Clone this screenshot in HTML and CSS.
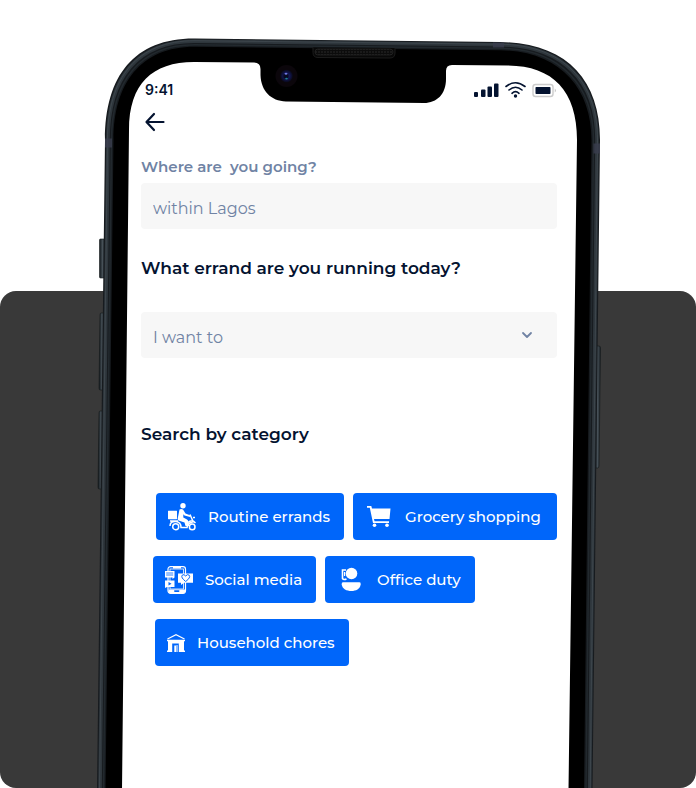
FILE: index.html
```html
<!DOCTYPE html>
<html lang="en">
<head>
<meta charset="utf-8">
<meta name="viewport" content="width=device-width, initial-scale=1">
<title>Errands</title>
<link rel="stylesheet" href="styles.css">
</head>
<body>
<main class="scene">
  <div class="stage">
    <svg class="device" viewBox="0 0 696 788" preserveAspectRatio="xMidYMin slice" aria-hidden="true">
      <defs>
        <linearGradient id="key" x1="0" x2="1" y1="0" y2="0">
          <stop offset="0" stop-color="#11171b"/><stop offset=".5" stop-color="#465057"/><stop offset="1" stop-color="#1c2328"/>
        </linearGradient>
        <radialGradient id="lens">
          <stop offset="0" stop-color="#232c9c"/><stop offset=".55" stop-color="#11154f"/><stop offset="1" stop-color="#090917"/>
        </radialGradient>
        <pattern id="mesh" width="3" height="3" patternUnits="userSpaceOnUse">
          <rect width="3" height="3" fill="#0c0c0c"/><circle cx="1" cy="1" r=".8" fill="#2a2a2a"/>
        </pattern>
      </defs>
      <!-- side keys -->
      <g fill="url(#key)" stroke="#12171a" stroke-width=".6">
        <rect x="99.500" y="239" width="6" height="39" rx="1"/>
        <path d="M101 313h4l-1 77h-4q-1 0-1-2l1-73q0-2 1-2z"/>
        <path d="M100 411h4l-1 78h-4q-1 0-1-2l1-74q0-2 1-2z"/>
        <path d="M596 346h3q1.500 0 1.500 2l-1.500 118q0 2-1.500 2h-3z"/>
      </g>
      <!-- body -->
      <path d="M97 790 105 140C105 75 135 38 195 38.500L500 42C565 43 600 78 600 140L592.500 790z" fill="#171b1f"/>
      <path d="M100 790 108 140C108 78 137 41 195 41.200L500 44.700C563 45.500 597 81 597 140L589.700 790z" fill="none" stroke="#2e363c" stroke-width="3.600"/>
      <path d="M99.500 790 107.500 140C107.500 78 137 40.500 195 40.700L500 44.200C563 45 597.500 81 597.500 140L590.200 790z" fill="none" stroke="#414a51" stroke-width=".8"/>
      <path d="M103.500 790 111.500 140C111.500 81 140 44.500 195 44.700L500 48.200C560 49 593.500 85 593.500 140L586 790z" fill="none" stroke="#22292e" stroke-width="1.500"/>
      <path d="M105.500 790 113.500 140C113.500 83 141 46.500 195 46.700L500 50.200C559 51 591.500 87 591.500 140L584 790z" fill="#000"/>
      <path d="M105 138.500h7v9h-7zM593.500 143.500h6.500v10h-6.500zM493 42.500h11v5h-11z" fill="#3a3d4d" opacity=".8"/>
      <!-- display with notch -->
      <path d="M122 790 129 130C129 84 152 62 194 62L254 62.500Q260.500 62.500 260.500 69V75C261 91 271 101 286 101.500L424 103C437 103 446 94 446 79V71Q446 65 452 65L508 65.500C553 66 577 91 577 140L568.500 790z" fill="#fff"/>
      <!-- speaker and camera -->
      <path d="M313 47.500v5q0 5 5 5l72 .5q5 0 5-5v-5" fill="#080808" stroke="#1c1c1c"/>
      <rect x="315" y="49" width="78" height="6" rx="3" fill="url(#mesh)" stroke="#2b2b2b" stroke-width=".6"/>
      <circle cx="286.500" cy="76" r="11" fill="#0b060b"/>
      <circle cx="286.500" cy="76" r="6.300" fill="url(#lens)"/>
      <circle cx="286" cy="76" r="2.700" fill="#070a20"/>
      <ellipse cx="286" cy="73.800" rx="1.500" ry="1" fill="#7078e0"/>
      <ellipse cx="286.500" cy="78.600" rx="1.300" ry=".9" fill="#1a838f"/>
    </svg>

    <div class="screen">
      <header class="status">
        <span>9:41</span>
        <svg width="84" height="20" viewBox="0 -2 84 20" aria-hidden="true">
          <g fill="#041330">
            <rect x="1" y="11" width="4" height="5" rx="1"/><rect x="8" y="8.500" width="4.500" height="7.500" rx="1"/><rect x="14.500" y="5.500" width="4.500" height="10.500" rx="1"/><rect x="21" y="2.500" width="4.500" height="13.500" rx="1"/>
            <circle cx="42.500" cy="15" r="1.700"/>
            <rect x="62.500" y="6" width="15" height="7" rx=".8"/>
          </g>
          <g fill="none" stroke="#041330" stroke-width="1.600" stroke-linecap="round">
            <path d="M33 5.500Q42.500-2 52 5.500M36 9Q42.500 3.500 49 9M39 12.300Q42.500 9 46 12.300"/>
          </g>
          <rect x="60" y="3.500" width="20" height="12" rx="2.500" fill="none" stroke="#ccc" stroke-width="1.400"/>
          <path d="M81.800 7.500q2 2 0 4z" fill="#bbb"/>
        </svg>
      </header>

      <button class="back" type="button" aria-label="Back">
        <svg width="24" height="24" viewBox="0 0 24 24" fill="none" stroke="#041330" stroke-width="2.200" stroke-linecap="round" stroke-linejoin="round" aria-hidden="true"><path d="M20.500 12H4M11 4 3.500 12l7.500 8"/></svg>
      </button>

      <form class="form">
        <label class="label" for="place">Where are  you going?</label>
        <input class="field" id="place" type="text" placeholder="within Lagos">
        <label class="title title-errand" for="errand">What errand are you running today?</label>
        <div class="picker">
          <select class="field" id="errand"><option>I want to</option></select>
          <svg class="chevron" width="12" height="8" viewBox="0 0 12 8" fill="none" stroke="#7083a4" stroke-width="1.800" stroke-linecap="round" stroke-linejoin="round" aria-hidden="true"><path d="M2 2l4 4 4-4"/></svg>
        </div>
      </form>

      <h2 class="title title-category">Search by category</h2>
      <div class="categories">
        <div class="row row-first">
          <button class="chip" type="button">
            <svg class="icon" viewBox="0 0 28 28" aria-hidden="true">
              <g fill="#fff"><circle cx="15" cy="2.800" r="2.700"/><rect y="7.700" width="9" height="8.500" rx=".4"/>
              <path d="M11.500 6.500Q13 5.500 15 6.500L17.500 10.500 22 12.300V14L16.500 12.500 15.300 11.300V14.500L19 16.500Q20 17 20.300 18.500L21.500 23H17.500L16.500 19.500 10.500 17.500Q9.500 17 9.700 15.500z"/></g>
              <g fill="none" stroke="#fff" stroke-width="1.500"><circle cx="7.700" cy="23.700" r="3"/><circle cx="24.200" cy="23.900" r="2.800"/><path d="M2 23Q2 18 8 18.500 13 19 13 24.500H19Q20 19.500 24.500 19.500M2 18h8M22 11.500l3.500 8M25 14.500h2M20 19.500q4-3.500 7.500.5"/></g>
            </svg>
            <span>Routine errands</span>
          </button>
          <button class="chip chip-wide" type="button">
            <svg class="icon" viewBox="0 0 28 28" aria-hidden="true">
              <path d="M2 3H6.300L7 5.500H25.500L24.500 16H9L9.500 18.200H24V20H8L4.800 4.700H2z" fill="#fff"/><circle cx="9.500" cy="22.200" r="1.800" fill="#fff"/><circle cx="22" cy="22.200" r="1.800" fill="#fff"/>
            </svg>
            <span>Grocery shopping</span>
          </button>
        </div>
        <div class="row row-second">
          <button class="chip" type="button">
            <svg class="icon" viewBox="0 0 28 28" aria-hidden="true">
              <rect x="3" y=".7" width="17.500" height="26.600" rx="2.500" fill="#0066fa" stroke="#fff" stroke-width="1.200"/>
              <rect x="5" y="3" width="13.500" height="20" fill="#0066fa" stroke="#fff" stroke-width=".8"/>
              <path d="M3.500 23.500h16.500V26q0 1-1 1H4.500q-1 0-1-1zM8 1h8v1.500H8z" fill="#fff"/><rect x="9" y="24.300" width="5.500" height="1.600" rx=".8" fill="#0066fa"/>
              <path d="M0 5h9.500v6.500L7.500 13v-1.500H0z" fill="#fff"/><path d="M1.200 7h7M1.200 9h7" stroke="#0066fa" stroke-width=".8"/>
              <path d="M0 14.500h9.500V21H2L0 22z" fill="#fff"/><path d="M3.500 16v3.600L6.500 17.800z" fill="#0066fa"/>
              <path d="M13 7.500h15v9.200H19l-3 2.300v-2.300h-3z" fill="#fff"/><path d="M20.700 15.500Q15.500 11.500 17.200 9.200 19 7.700 20.700 10 22.400 7.700 24.200 9.200 26 11.500 20.700 15.500z" fill="#fff" stroke="#0066fa" stroke-width="1"/>
            </svg>
            <span>Social media</span>
          </button>
          <button class="chip" type="button">
            <svg class="icon" viewBox="0 0 28 28" aria-hidden="true">
              <circle cx="14.500" cy="7.500" r="5.800" fill="#fff"/><path d="M9 4H5.500V12.500Q6.500 14.200 9.500 13" fill="none" stroke="#fff" stroke-width="1.600"/><path d="M7.600 6v4" stroke="#fff" stroke-width="1.200"/>
              <path d="M6 16.300H22.500Q24 16.300 23.700 18.500C23 23 19 25 14.300 25S5.400 23 4.700 18.500Q4.500 16.300 6 16.300z" fill="#fff"/>
            </svg>
            <span>Office duty</span>
          </button>
        </div>
        <div class="row">
          <button class="chip" type="button">
            <svg class="icon icon-small" viewBox="0 0 18 28" aria-hidden="true">
              <path d="M.5 10 9 5.700 17.500 10" fill="none" stroke="#fff" stroke-width="1.300"/>
              <path d="M0 10.800H18V12.200H17V21.500H18V23H0V21.500H1V12.200H0z" fill="#fff"/>
              <path d="M5.200 23V14.500H11.800V23z" fill="#0066fa"/><path d="M7.300 23V16.500H11V23z" fill="#fff"/><path d="M10 17v6" stroke="#0066fa" stroke-width=".9"/>
            </svg>
            <span>Household chores</span>
          </button>
        </div>
      </div>
    </div>
  </div>
</main>
</body>
</html>
```
FILE: styles.css
```css
* { box-sizing: border-box; }

body {
  margin: 0;
  background: #fff;
  color: #041330;
  font-family: Montserrat, Inter, "Liberation Sans", sans-serif;
}

button, input, select { font: inherit; }

.scene {
  min-height: 100vh;
  background: #fff;
  position: relative;
  overflow: hidden;
}

.scene::before {
  content: "";
  position: absolute;
  inset: 291px 0 0;
  border-radius: 16px;
  background: #393939;
}

.stage {
  position: relative;
  display: grid;
  max-width: 696px;
  min-height: 100vh;
  margin: 0 auto;
}

.device {
  grid-area: 1 / 1;
  width: 100%;
  height: 100%;
}

.screen {
  grid-area: 1 / 1;
  z-index: 1;
  min-width: 0;
  padding: 79px 139px 40px 141px;
}

.status {
  display: flex;
  justify-content: space-between;
  align-items: center;
  height: 20px;
  padding-left: 4px;
  font-family: Inter, sans-serif;
  font-size: 14px;
  font-weight: 600;
}

.back {
  display: block;
  height: 24px;
  margin: 11px 0 23px;
  padding: 0 2px;
  border: 0;
  background: none;
  cursor: pointer;
}

.form {
  display: flex;
  flex-direction: column;
}

.label {
  margin-bottom: 6px;
  color: #7083a4;
  font-size: 15px;
  line-height: 20px;
  font-weight: 600;
  white-space: pre;
}

.field {
  width: 100%;
  height: 46px;
  padding: 4px 12px 0;
  border: 0;
  border-radius: 4px;
  background: #f7f7f7;
  color: #7083a4;
  font-size: 16px;
  appearance: none;
}

.field::placeholder { color: #7083a4; opacity: 1; }

.title {
  margin: 0;
  color: #041330;
  font-size: 17px;
  line-height: 24px;
  font-weight: 600;
}

.title-errand { margin: 27px 0 32px; }

.title-category { margin: 64px 0 47px; }

.picker {
  display: grid;
  align-items: center;
}

.picker > * { grid-area: 1 / 1; }

.chevron {
  justify-self: end;
  margin-right: 24px;
  pointer-events: none;
}

.categories {
  display: flex;
  flex-direction: column;
  gap: 16px;
  padding-left: 12px;
}

.row {
  display: flex;
  gap: 9px;
  padding-left: 2px;
}

.row-first { padding-left: 3px; }
.row-second { padding-left: 0; }

.chip {
  display: flex;
  align-items: center;
  gap: 12px;
  height: 47px;
  padding: 0 14px 0 12px;
  border: 0;
  border-radius: 4px;
  background: #0066fa;
  color: #fff;
  font-size: 15px;
  font-weight: 500;
  white-space: nowrap;
  cursor: pointer;
}

.chip-wide { flex: 1; }

.icon {
  flex: none;
  width: 28px;
  height: 28px;
}

.icon-small { width: 18px; }
```
